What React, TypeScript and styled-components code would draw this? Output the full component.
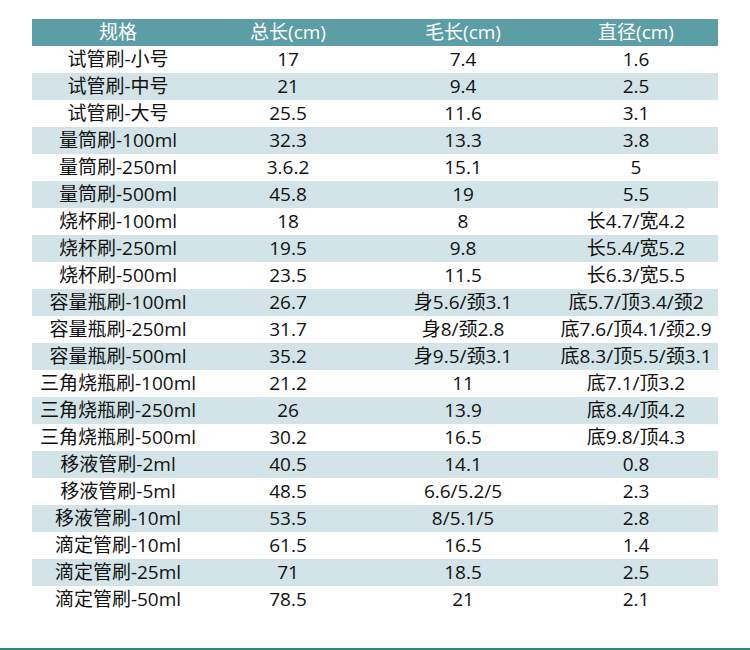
import styled, { createGlobalStyle } from 'styled-components'

const GlobalStyle = createGlobalStyle`
  html, body {
    margin: 0;
    padding: 0;
    background: #ffffff;
  }
`

const COLORS = {
  header: '#5c9ea5',
  stripe: '#d2e4e7',
  text: '#111111',
  rule: '#2f8a72',
}

const Page = styled.div`
  width: 750px;
  height: 650px;
  display: flex;
  flex-direction: column;
  font-family: 'Open Sans', 'Noto Sans CJK SC', sans-serif;
  font-size: 19px;
  color: ${COLORS.text};
`

const Table = styled.table`
  width: 686px;
  margin: 19px 0 0 32px;
  border-collapse: collapse;
  table-layout: fixed;
`

const HeadCell = styled.th`
  height: 27px;
  padding: 0;
  line-height: 27px;
  font-weight: 400;
  color: #ffffff;
  background: ${COLORS.header};
  text-align: center;
  white-space: nowrap;
`

const Row = styled.tr<{ $striped: boolean }>`
  background: ${(p) => (p.$striped ? COLORS.stripe : 'transparent')};
`

const Cell = styled.td`
  height: 27px;
  padding: 0;
  line-height: 27px;
  text-align: center;
  white-space: nowrap;
`

const Rule = styled.div`
  margin-top: auto;
  height: 2px;
  background: ${COLORS.rule};
`

const COLUMNS = [
  { title: '规格', width: 172 },
  { title: '总长(cm)', width: 168 },
  { title: '毛长(cm)', width: 182 },
  { title: '直径(cm)', width: 164 },
]

const ROWS: string[][] = [
  ['试管刷-小号', '17', '7.4', '1.6'],
  ['试管刷-中号', '21', '9.4', '2.5'],
  ['试管刷-大号', '25.5', '11.6', '3.1'],
  ['量筒刷-100ml', '32.3', '13.3', '3.8'],
  ['量筒刷-250ml', '3.6.2', '15.1', '5'],
  ['量筒刷-500ml', '45.8', '19', '5.5'],
  ['烧杯刷-100ml', '18', '8', '长4.7/宽4.2'],
  ['烧杯刷-250ml', '19.5', '9.8', '长5.4/宽5.2'],
  ['烧杯刷-500ml', '23.5', '11.5', '长6.3/宽5.5'],
  ['容量瓶刷-100ml', '26.7', '身5.6/颈3.1', '底5.7/顶3.4/颈2'],
  ['容量瓶刷-250ml', '31.7', '身8/颈2.8', '底7.6/顶4.1/颈2.9'],
  ['容量瓶刷-500ml', '35.2', '身9.5/颈3.1', '底8.3/顶5.5/颈3.1'],
  ['三角烧瓶刷-100ml', '21.2', '11', '底7.1/顶3.2'],
  ['三角烧瓶刷-250ml', '26', '13.9', '底8.4/顶4.2'],
  ['三角烧瓶刷-500ml', '30.2', '16.5', '底9.8/顶4.3'],
  ['移液管刷-2ml', '40.5', '14.1', '0.8'],
  ['移液管刷-5ml', '48.5', '6.6/5.2/5', '2.3'],
  ['移液管刷-10ml', '53.5', '8/5.1/5', '2.8'],
  ['滴定管刷-10ml', '61.5', '16.5', '1.4'],
  ['滴定管刷-25ml', '71', '18.5', '2.5'],
  ['滴定管刷-50ml', '78.5', '21', '2.1'],
]

export default function App() {
  return (
    <>
      <GlobalStyle />
      <Page>
        <Table>
          <colgroup>
            {COLUMNS.map((c) => (
              <col key={c.title} style={{ width: c.width }} />
            ))}
          </colgroup>
          <thead>
            <tr>
              {COLUMNS.map((c) => (
                <HeadCell key={c.title}>{c.title}</HeadCell>
              ))}
            </tr>
          </thead>
          <tbody>
            {ROWS.map((row, i) => (
              <Row key={row[0]} $striped={i % 2 === 1}>
                {row.map((value, j) => (
                  <Cell key={j}>{value}</Cell>
                ))}
              </Row>
            ))}
          </tbody>
        </Table>
        <Rule />
      </Page>
    </>
  )
}
